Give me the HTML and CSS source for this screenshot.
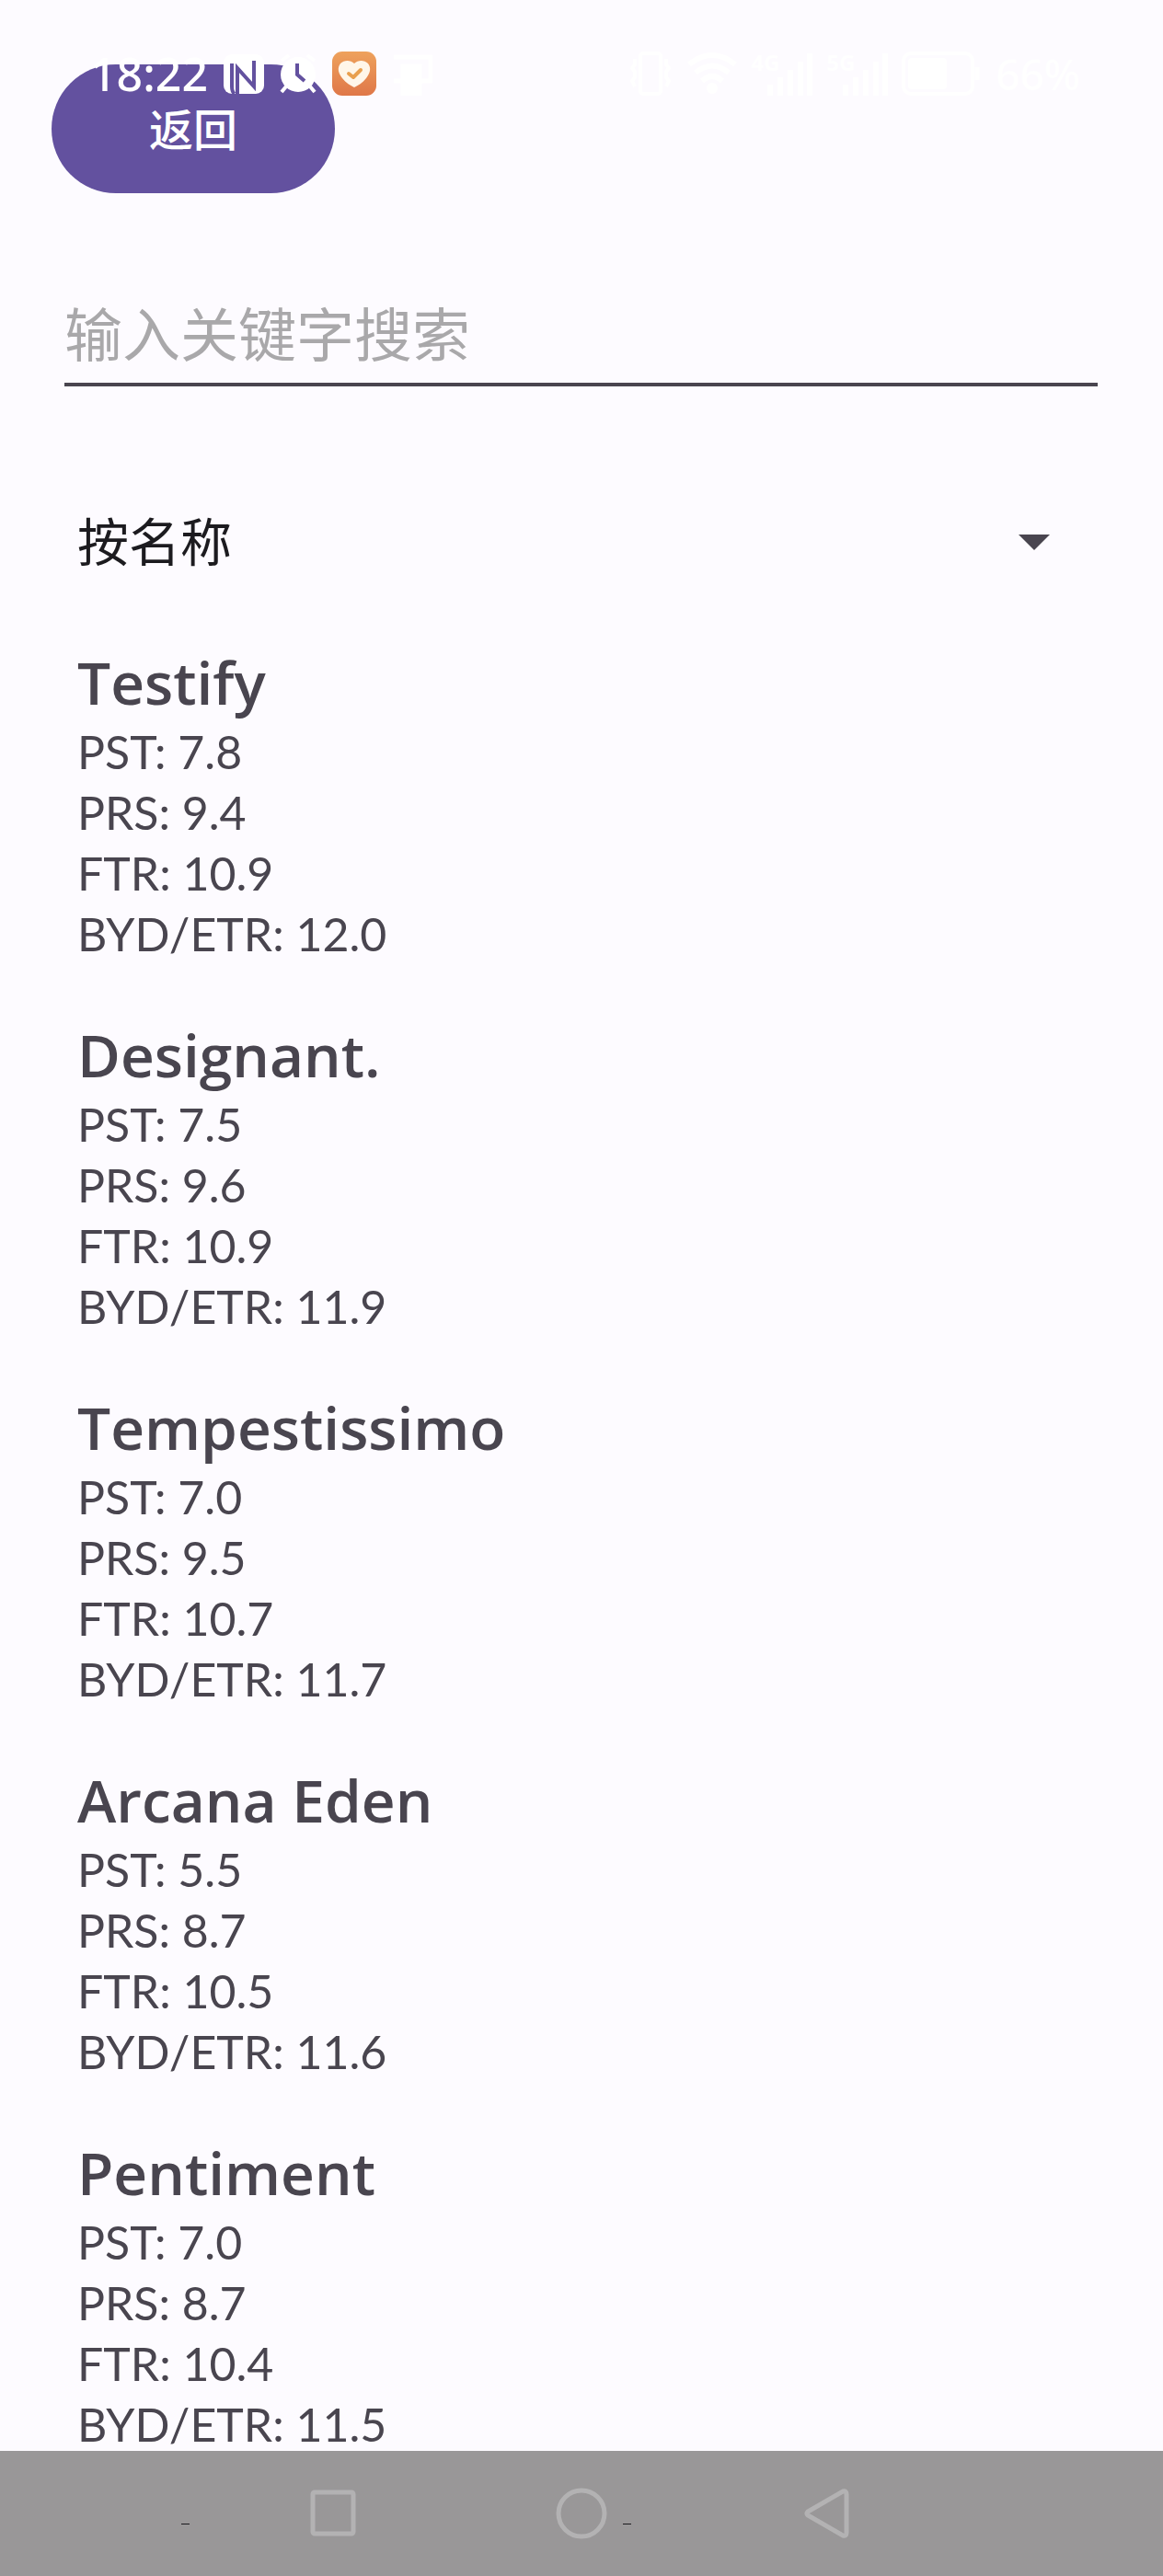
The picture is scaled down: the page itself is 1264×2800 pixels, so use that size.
FILE: index.html
```
<!DOCTYPE html>
<html lang="zh-CN">
  <head>
    <meta charset="UTF-8" />
    <meta name="viewport" content="width=device-width, initial-scale=1" />
    <title>搜索</title>
    <link rel="stylesheet" href="styles.css">
  </head>

  <body>
    <!-- System status bar, drawn over the page -->
    <div class="status-bar">
      <div class="status-left">
        <span class="clock">18:22</span>
        <svg width="44" height="48" viewBox="0 0 44 48">
          <rect x="0" y="3" width="44" height="43" rx="9" fill="#fff" />
          <path d="M12 46Q9 44 9 38V13M15 46V18L33 38V10" class="nfc-line" />
        </svg>
        <svg width="40" height="48" viewBox="0 0 40 48">
          <circle cx="20" cy="25" r="19" fill="#fff" />
          <path d="M7 38L2 44M33 38L38 44M2 10L10 4M38 10L30 4" stroke="#fff" stroke-width="4" />
          <path d="M19 13V25L27 32" fill="none" stroke="#63519f" stroke-width="4" />
        </svg>
        <svg width="48" height="48" viewBox="0 0 48 48">
          <defs>
            <linearGradient id="health" x1="0" y1="0" x2="0" y2="1">
              <stop offset="0" stop-color="#eea25c" />
              <stop offset="1" stop-color="#df7748" />
            </linearGradient>
          </defs>
          <rect width="48" height="48" rx="11" fill="url(#health)" />
          <path d="M24 13C20 9 13 9 9 13C5 18 7 24 11 29C15 34 20 37 24 39C28 37 33 34 37 29C41 24 43 18 39 13C35 9 28 9 24 13Z" fill="#fff6e9" />
          <path d="M18 24L23 28L31 20" fill="none" stroke="#e9a04f" stroke-width="4" stroke-linecap="round" stroke-linejoin="round" />
        </svg>
        <svg width="44" height="48" viewBox="0 0 44 48" fill="none" stroke="#fff" stroke-width="5">
          <path d="M2 6H42V32H32M2 32H10" />
          <rect x="12" y="16" width="18" height="30" fill="#fff" />
        </svg>
      </div>
      <div class="status-right">
        <svg width="50" height="48" viewBox="0 0 50 48" fill="none" stroke="#fff" stroke-width="4">
          <rect x="14" y="2" width="22" height="44" rx="3" />
          <path d="M8 8V14L5 18L8 22V28L5 32L8 38M42 8V14L45 18L42 22V28L45 32L42 38" />
        </svg>
        <svg width="56" height="48" viewBox="0 0 56 48" fill="none" stroke="#fff" stroke-width="6">
          <path d="M3 14Q28 -6 53 14M10 23Q28 8 46 23M17 32Q28 22 39 32" />
          <circle cx="28" cy="40" r="3" fill="#fff" />
        </svg>
        <span class="signal">
          <span class="network">4G</span>
          <svg width="50" height="48" viewBox="0 0 50 48" fill="#fff">
            <path d="M0 36H6V48H0ZM11 28H17V48H11ZM22 20H28V48H22ZM33 11H39V48H33ZM43 2H49V48H43Z" />
          </svg>
        </span>
        <span class="signal">
          <span class="network">5G</span>
          <svg width="50" height="48" viewBox="0 0 50 48" fill="#fff">
            <path d="M0 36H6V48H0ZM11 28H17V48H11ZM22 20H28V48H22ZM33 11H39V48H33ZM43 2H49V48H43Z" />
          </svg>
        </span>
        <svg width="88" height="48" viewBox="0 0 88 48">
          <rect x="2" y="2" width="75" height="44" rx="8" fill="none" stroke="#fff" stroke-width="4" />
          <rect x="7" y="7" width="42" height="34" rx="4" fill="#fff" />
          <path d="M82 17V31" stroke="#fff" stroke-width="5" />
        </svg>
        <span class="battery-level">66%</span>
      </div>
    </div>

    <header>
      <button class="back-button" type="button">返回</button>
    </header>

    <!-- Search Bar -->
    <div class="search-container">
      <input type="text" id="search-box" placeholder="输入关键字搜索" aria-label="输入关键字搜索" />
    </div>

    <div class="sort-container">
      <select id="sort-by" aria-label="排序">
        <option>按名称</option>
      </select>
      <svg class="sort-arrow" width="34" height="17" viewBox="0 0 34 17">
        <path d="M0 0H34L17 17Z" fill="#49454f" />
      </svg>
    </div>

    <!-- Song List Section -->
    <main class="song-list">
      <section class="song">
        <h2>Testify</h2>
        <p>PST: 7.8</p>
        <p>PRS: 9.4</p>
        <p>FTR: 10.9</p>
        <p>BYD/ETR: 12.0</p>
      </section>
      <section class="song">
        <h2>Designant.</h2>
        <p>PST: 7.5</p>
        <p>PRS: 9.6</p>
        <p>FTR: 10.9</p>
        <p>BYD/ETR: 11.9</p>
      </section>
      <section class="song">
        <h2>Tempestissimo</h2>
        <p>PST: 7.0</p>
        <p>PRS: 9.5</p>
        <p>FTR: 10.7</p>
        <p>BYD/ETR: 11.7</p>
      </section>
      <section class="song">
        <h2>Arcana Eden</h2>
        <p>PST: 5.5</p>
        <p>PRS: 8.7</p>
        <p>FTR: 10.5</p>
        <p>BYD/ETR: 11.6</p>
      </section>
      <section class="song">
        <h2>Pentiment</h2>
        <p>PST: 7.0</p>
        <p>PRS: 8.7</p>
        <p>FTR: 10.4</p>
        <p>BYD/ETR: 11.5</p>
      </section>
    </main>

    <!-- System navigation -->
    <nav class="nav-bar">
      <button type="button" aria-label="最近任务">
        <svg width="56" height="56" viewBox="0 0 56 56">
          <rect x="6" y="5" width="44" height="45" rx="2" />
        </svg>
      </button>
      <button type="button" aria-label="主屏幕">
        <svg width="56" height="56" viewBox="0 0 56 56">
          <circle cx="28" cy="28" r="25" />
        </svg>
      </button>
      <button type="button" aria-label="返回上一页">
        <svg width="56" height="56" viewBox="0 0 56 56">
          <path d="M4 26Q2 28 4 30L42 52Q46 53 46 49V7Q46 3 42 4Z" />
        </svg>
      </button>
      <span class="mark mark-left"></span>
      <span class="mark mark-center"></span>
    </nav>
  </body>
</html>
```

FILE: styles.css
```
/* Global Styles */
* {
  box-sizing: border-box;
}

body {
  display: flex;
  flex-direction: column;
  height: 100vh;
  margin: 0;
  background-color: #fdfbff;
  color: #49454f;
  font-family: Lato, 'Noto Sans CJK SC', sans-serif;
}

button,
input,
select {
  margin: 0;
  padding: 0;
  border: none;
  border-radius: 0;
  background: none;
  font-family: inherit;
}

svg {
  display: block;
}

/* Status Bar */
.status-bar {
  position: absolute;
  top: 56px;
  left: 0;
  right: 0;
  display: flex;
  justify-content: space-between;
  height: 48px;
  padding: 0 90px 0 98px;
  color: #fff;
  font-family: 'Noto Sans', sans-serif;
  line-height: 48px;
  pointer-events: none;
}

.status-left,
.status-right {
  display: flex;
  align-items: center;
  gap: 17px;
}

.status-right {
  gap: 14px;
}

.clock {
  font-size: 50px;
  font-weight: 500;
}

.battery-level {
  font-size: 46px;
  font-weight: 500;
}

.nfc-line {
  fill: none;
  stroke: #63519f;
  stroke-width: 4px;
}

.signal {
  position: relative;
  padding-left: 18px;
}

.network {
  position: absolute;
  top: 0;
  left: 0;
  font-size: 24px;
  font-weight: 700;
  line-height: 24px;
}

/* Header */
header {
  padding: 70px 56px 0;
}

.back-button {
  display: block;
  width: 308px;
  height: 140px;
  padding-bottom: 4px;
  border-radius: 70px;
  background-color: #63519f;
  color: #fff;
  font-size: 48px;
  font-weight: 500;
}

/* Search */
.search-container {
  padding: 98px 71px 0 70px;
}

.search-container input {
  display: block;
  width: 100%;
  height: 112px;
  border-bottom: 4px solid #49454f;
  color: #1c1b1f;
  font-size: 63px;
  outline: none;
}

.search-container input::placeholder {
  color: #a9a8aa;
  opacity: 1;
}

/* Sort */
.sort-container {
  position: relative;
  padding: 98px 56px 0;
}

.sort-container select {
  display: block;
  width: 100%;
  height: 140px;
  padding-left: 28px;
  appearance: none;
  color: #1c1b1f;
  font-size: 56px;
}

.sort-arrow {
  position: absolute;
  right: 123px;
  bottom: 60px;
  pointer-events: none;
}

/* Song List */
.song-list {
  flex: 1;
  min-height: 0;
  padding: 42px 84px 0;
  overflow-y: auto;
  scrollbar-width: none;
}

.song {
  margin-bottom: 57px;
}

.song h2 {
  margin: 0;
  font-family: 'Open Sans', sans-serif;
  font-size: 64px;
  font-weight: 600;
  line-height: 84px;
}

.song p {
  margin: 0;
  font-size: 50px;
  line-height: 66px;
}

/* Navigation Bar */
.nav-bar {
  position: relative;
  display: flex;
  flex: none;
  justify-content: center;
  gap: 214px;
  height: 136px;
  background-color: #999798;
}

.nav-bar button {
  width: 56px;
}

.nav-bar svg {
  fill: none;
  stroke: #b3b2b3;
  stroke-width: 5px;
}

.mark {
  position: absolute;
  bottom: 56px;
  width: 9px;
  height: 1px;
  background-color: #1c1b1f;
}

.mark-left {
  left: 197px;
}

.mark-center {
  left: 677px;
}
```
